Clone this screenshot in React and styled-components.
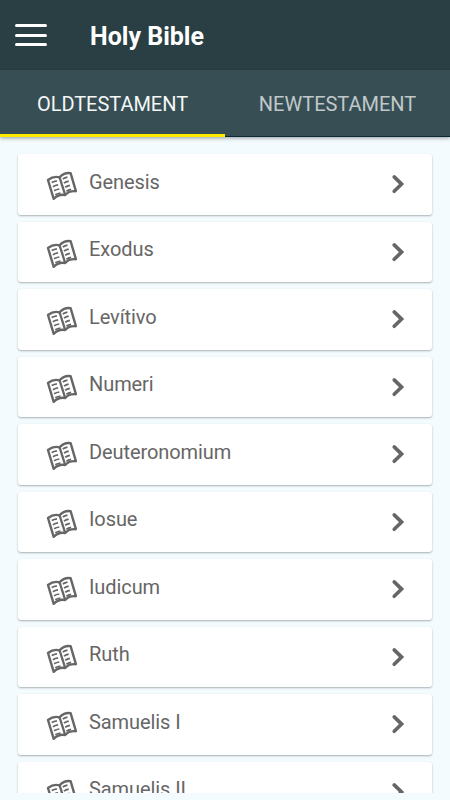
import React from 'react';
import styled, { createGlobalStyle } from 'styled-components';

const GlobalStyle = createGlobalStyle`
  * { box-sizing: border-box; }
  body { margin: 0; background: #f3fbff; font-family: Roboto, sans-serif; overflow: hidden; }
`;

const Screen = styled.div`
  display: flex;
  flex-direction: column;
  width: 450px;
  height: 800px;
  padding-bottom: 7px;
  background: #f3fbff;
`;

const Header = styled.header`
  flex: none;
  z-index: 1;
  box-shadow: 0 1px 4px rgba(0, 0, 0, 0.4);
`;

const Toolbar = styled.div`
  display: flex;
  align-items: center;
  height: 70px;
  padding: 0 15px;
  gap: 43px;
  background: #293f44;
  border-bottom: 1px solid #253b40;
`;

const MenuButton = styled.button`
  display: flex;
  flex-direction: column;
  gap: 6.4px;
  width: 32px;
  margin-top: 1px;
  padding: 0;
  border: 0;
  background: none;
`;

const MenuLine = styled.span`
  height: 3px;
  border-radius: 2px;
  background: #fff;
`;

const Title = styled.h1`
  margin: 5px 0 0;
  font-size: 25px;
  line-height: 30px;
  font-weight: 700;
  color: #fff;
`;

const Tabs = styled.nav`
  display: grid;
  grid-template-columns: 1fr 1fr;
  height: 67px;
  background: #374f54;
`;

const Tab = styled.button`
  padding: 4px 0 0;
  border: 0;
  border-bottom: ${(p) => (p.$active ? '3px solid #ffea00' : '1px solid #0b2930')};
  ${(p) => !p.$active && 'padding-bottom: 2px;'}
  background: none;
  font: 400 20px/24px Roboto, sans-serif;
  letter-spacing: -0.03px;
  color: ${(p) => (p.$active ? '#f5f7f7' : '#c0c8ca')};
`;

const List = styled.main`
  flex: 1;
  min-height: 0;
  overflow: hidden;
  padding: 17px 18px 0;
`;

const Card = styled.div`
  display: flex;
  align-items: flex-start;
  height: 60.5px;
  margin-bottom: 7px;
  padding: 0 28px;
  border-radius: 3px;
  background: #fff;
  box-shadow: 0 1px 2px rgba(0, 0, 0, 0.3);
  color: #666;
`;

const BookDrawing = styled.svg`
  flex: none;
  width: 32px;
  height: 30px;
  margin-top: 17px;
`;

const Name = styled.span`
  flex: 1;
  margin: 15.5px 0 0 11px;
  font-size: 20px;
  line-height: 24px;
  letter-spacing: -0.08px;
`;

const ChevronDrawing = styled.svg`
  flex: none;
  width: 14px;
  height: 22px;
  margin: 19.4px -0.7px 0 0;
`;

const BookIcon = () => (
  <BookDrawing viewBox="0 0 32 30" fill="none" stroke="#666" strokeLinejoin="round">
    <path
      strokeWidth="2.4"
      d="M2 9C5 6.6 9.6 5.2 13.6 6.3C16.2 3.2 20.5 1.6 24.6 2.1L29.9 20.2C25.7 19.8 21.8 21 19.2 24C15 23.2 10.9 24.6 7.7 27.8Z"
    />
    <path strokeWidth="2.3" d="M13.6 6.3L19.2 24" />
    <path
      strokeWidth="1.7"
      d="M5.7 11.6Q8 10.2 10.9 9.8M6.9 15.7Q9.2 14.3 12.1 13.9M8.1 19.8Q10.4 18.4 13.3 18M9.3 23.8Q11.6 22.4 14.5 22M16.8 8Q18.7 6.7 21.5 6.1M18 12.1Q19.9 10.8 22.7 10.2M19.2 16.2Q21.1 14.9 23.9 14.3M20.4 20.2Q22.3 18.9 25.1 18.3"
    />
  </BookDrawing>
);

const Chevron = () => (
  <ChevronDrawing viewBox="0 0 14 22" fill="none" stroke="#666" strokeWidth="3.6" strokeLinecap="round">
    <path d="M3.2 3.9L10.6 11.1L3.2 18.3" />
  </ChevronDrawing>
);

const books = [
  'Genesis', 'Exodus', 'Levítivo', 'Numeri', 'Deuteronomium',
  'Iosue', 'Iudicum', 'Ruth', 'Samuelis I', 'Samuelis II',
];

export default function App() {
  return (
    <Screen>
      <GlobalStyle />
      <Header>
        <Toolbar>
          <MenuButton aria-label="Menu">
            <MenuLine />
            <MenuLine />
            <MenuLine />
          </MenuButton>
          <Title>Holy Bible</Title>
        </Toolbar>
        <Tabs>
          <Tab $active>OLDTESTAMENT</Tab>
          <Tab>NEWTESTAMENT</Tab>
        </Tabs>
      </Header>
      <List>
        {books.map((book) => (
          <Card key={book}>
            <BookIcon />
            <Name>{book}</Name>
            <Chevron />
          </Card>
        ))}
      </List>
    </Screen>
  );
}
